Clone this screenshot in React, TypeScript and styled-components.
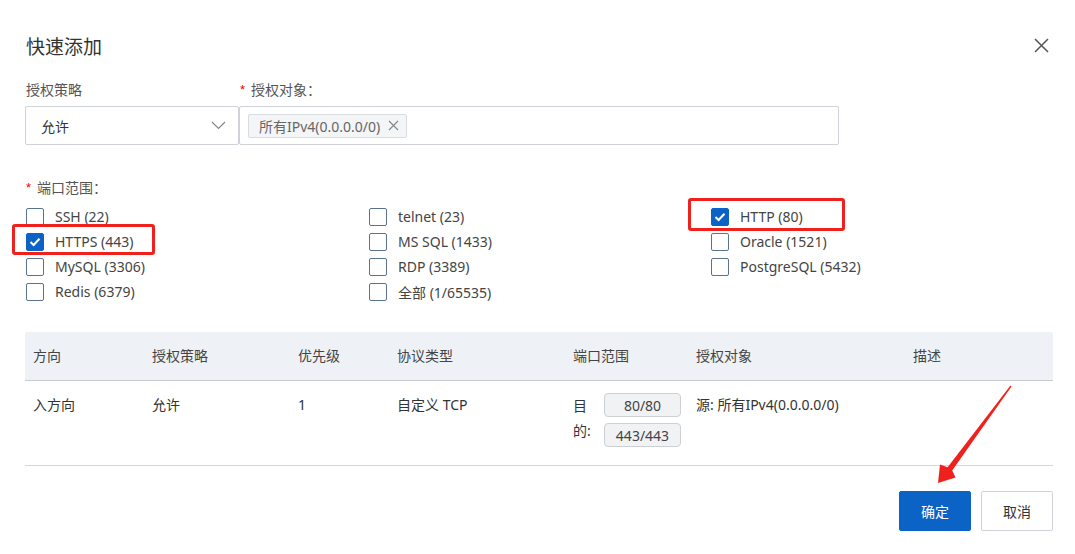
import * as React from "react";
import styled, { createGlobalStyle } from "styled-components";

const GlobalStyle = createGlobalStyle`
  html, body {
    margin: 0;
    padding: 0;
    background: #fff;
  }
  body {
    font-family: "Noto Sans", "Noto Sans CJK SC", sans-serif;
    font-size: 14px;
    color: #333;
  }
`;

const Dialog = styled.div`
  position: relative;
  width: 1075px;
  height: 554px;
  box-sizing: border-box;
  padding: 31px 22px 0 25px;
  background: #fff;
`;

const Header = styled.div`
  display: flex;
  align-items: center;
  justify-content: space-between;
  height: 28px;
`;

const Title = styled.h2`
  margin: 0;
  padding-left: 1px;
  font-size: 19px;
  font-weight: 400;
  color: #333;
  font-family: "Noto Sans CJK SC", sans-serif;
`;

const CloseButton = styled.button`
  display: flex;
  align-items: center;
  justify-content: center;
  border: 0;
  background: none;
  padding: 0;
  margin-right: 3px;
  width: 18px;
  height: 18px;
  color: #555;
  cursor: pointer;
`;

const FormRow = styled.div`
  display: flex;
  margin-top: 20px;
`;

const Field = styled.div<{ $width?: number }>`
  display: flex;
  flex-direction: column;
  width: ${(p) => (p.$width ? `${p.$width}px` : "auto")};
  flex: ${(p) => (p.$width ? "none" : "1")};
`;

const Label = styled.div<{ $required?: boolean }>`
  display: flex;
  align-items: center;
  height: 20px;
  margin-bottom: 7px;
  padding-left: ${(p) => (p.$required ? "0" : "1px")};
  font-size: 14px;
  color: #555;
  font-family: "Noto Sans CJK SC", sans-serif;
`;

const Star = styled.span`
  color: #e00;
  font-size: 13px;
  margin: 0 6px 0 1px;
  font-family: "Liberation Sans", sans-serif;
`;

const SelectBox = styled.div`
  display: flex;
  align-items: center;
  justify-content: space-between;
  box-sizing: border-box;
  height: 39px;
  padding: 0 12px 0 15px;
  border: 1px solid #cfd2d6;
  border-radius: 2px;
  color: #333;
  font-family: "Noto Sans CJK SC", sans-serif;
`;

const TagInput = styled.div`
  display: flex;
  align-items: center;
  box-sizing: border-box;
  height: 39px;
  width: 600px;
  padding: 0 8px;
  border: 1px solid #cfd2d6;
  border-radius: 2px;
`;

const Tag = styled.span`
  display: inline-flex;
  align-items: center;
  gap: 8px;
  height: 24px;
  box-sizing: border-box;
  padding: 0 7px 0 10px;
  background: #f4f5f7;
  border: 1px solid #d9dce1;
  border-radius: 2px;
  color: #666;
  font-size: 14px;
`;

const PortSection = styled.div`
  position: relative;
  margin-top: 32px;
`;

const CheckGrid = styled.div`
  display: grid;
  grid-template-columns: 343px 342px 1fr;
  grid-template-rows: repeat(4, 25px);
  grid-auto-flow: column;
  margin-top: 2px;
`;

const CheckItem = styled.label`
  display: flex;
  align-items: center;
  gap: 11px;
  padding-left: 1px;
  color: #444;
  font-size: 14px;
  cursor: pointer;
`;

const Box = styled.span<{ $checked?: boolean }>`
  display: inline-flex;
  align-items: center;
  justify-content: center;
  box-sizing: border-box;
  width: 18px;
  height: 18px;
  border-radius: 2px;
  border: 1px solid ${(p) => (p.$checked ? "#0b63c5" : "#5b7392")};
  background: ${(p) => (p.$checked ? "#0b63c5" : "#fff")};
`;

const Highlight = styled.div<{ $x: number; $y: number; $w: number; $h: number }>`
  position: absolute;
  left: ${(p) => p.$x}px;
  top: ${(p) => p.$y}px;
  width: ${(p) => p.$w}px;
  height: ${(p) => p.$h}px;
  box-sizing: border-box;
  border: 3px solid #f0201c;
  border-radius: 3px;
  pointer-events: none;
`;

const Table = styled.div`
  margin-top: 28px;
  width: 1028px;
`;

const cols = "119px 146px 99px 176px 123px 217px 1fr";

const HeadRow = styled.div`
  display: grid;
  grid-template-columns: ${cols};
  align-items: center;
  height: 48px;
  background: #eef1f6;
  border-bottom: 1px solid #c9ccd1;
  border-radius: 2px 2px 0 0;
`;

const BodyRow = styled.div`
  display: grid;
  grid-template-columns: ${cols};
  align-items: start;
  height: 85px;
  box-sizing: border-box;
  padding-top: 12px;
  border-bottom: 1px solid #d5d7da;
`;

const Cell = styled.div<{ $head?: boolean }>`
  padding-left: 8px;
  line-height: 24px;
  color: ${(p) => (p.$head ? "#444" : "#333")};
  font-size: 14px;
`;

const PortCell = styled.div`
  display: flex;
  gap: 9px;
  padding-left: 8px;
`;

const PortLabel = styled.span`
  width: 22px;
  line-height: 25px;
  color: #333;
`;

const PillStack = styled.div`
  display: flex;
  flex-direction: column;
  gap: 6px;
`;

const Pill = styled.span`
  display: inline-flex;
  align-items: center;
  justify-content: center;
  box-sizing: border-box;
  width: 77px;
  height: 24px;
  background: #f1f2f4;
  border: 1px solid #cdd0d5;
  border-radius: 4px;
  color: #444;
  font-size: 14px;
`;

const Footer = styled.div`
  display: flex;
  justify-content: flex-end;
  gap: 10px;
  margin-top: 25px;
  width: 1028px;
`;

const Button = styled.button<{ $primary?: boolean }>`
  width: 72px;
  height: 40px;
  border-radius: 2px;
  border: 1px solid ${(p) => (p.$primary ? "#0b63c5" : "#cfd2d6")};
  background: ${(p) => (p.$primary ? "#0b63c5" : "#fff")};
  color: ${(p) => (p.$primary ? "#fff" : "#333")};
  font-size: 14px;
  font-family: "Noto Sans CJK SC", sans-serif;
  cursor: pointer;
`;

const ArrowLayer = styled.svg`
  position: absolute;
  left: 0;
  top: 0;
  pointer-events: none;
`;

const ports: { label: string; checked?: boolean }[] = [
  { label: "SSH (22)" },
  { label: "HTTPS (443)", checked: true },
  { label: "MySQL (3306)" },
  { label: "Redis (6379)" },
  { label: "telnet (23)" },
  { label: "MS SQL (1433)" },
  { label: "RDP (3389)" },
  { label: "全部 (1/65535)" },
  { label: "HTTP (80)", checked: true },
  { label: "Oracle (1521)" },
  { label: "PostgreSQL (5432)" },
];

const headers = ["方向", "授权策略", "优先级", "协议类型", "端口范围", "授权对象", "描述"];

const Check = () => (
  <svg width="12" height="10" viewBox="0 0 12 10">
    <path d="M1.5 5 L4.6 8 L10.5 1.8" fill="none" stroke="#fff" strokeWidth="2" />
  </svg>
);

export default function App() {
  return (
    <>
      <GlobalStyle />
      <Dialog>
        <Header>
          <Title>快速添加</Title>
          <CloseButton aria-label="关闭">
            <svg width="15" height="15" viewBox="0 0 15 15">
              <path d="M1 1 L14 14 M14 1 L1 14" stroke="#555" strokeWidth="1.5" />
            </svg>
          </CloseButton>
        </Header>

        <FormRow>
          <Field $width={214}>
            <Label>授权策略</Label>
            <SelectBox>
              <span>允许</span>
              <svg width="15" height="9" viewBox="0 0 15 9">
                <path d="M1 1 L7.5 7.5 L14 1" fill="none" stroke="#888" strokeWidth="1.2" />
              </svg>
            </SelectBox>
          </Field>
          <Field>
            <Label $required>
              <Star>*</Star>授权对象：
            </Label>
            <TagInput>
              <Tag>
                所有IPv4(0.0.0.0/0)
                <svg width="11" height="11" viewBox="0 0 11 11">
                  <path d="M1 1 L10 10 M10 1 L1 10" stroke="#888" strokeWidth="1.2" />
                </svg>
              </Tag>
            </TagInput>
          </Field>
        </FormRow>

        <PortSection>
          <Label $required>
            <Star>*</Star>端口范围：
          </Label>
          <CheckGrid>
            {ports.map((p) => (
              <CheckItem key={p.label}>
                <Box $checked={p.checked}>{p.checked && <Check />}</Box>
                {p.label}
              </CheckItem>
            ))}
          </CheckGrid>
          <Highlight $x={-13} $y={47} $w={143} $h={31} />
          <Highlight $x={663} $y={21} $w={157} $h={33} />
        </PortSection>

        <Table>
          <HeadRow>
            {headers.map((h) => (
              <Cell key={h} $head>
                {h}
              </Cell>
            ))}
          </HeadRow>
          <BodyRow>
            <Cell>入方向</Cell>
            <Cell>允许</Cell>
            <Cell>1</Cell>
            <Cell>自定义 TCP</Cell>
            <PortCell>
              <PortLabel>目的:</PortLabel>
              <PillStack>
                <Pill>80/80</Pill>
                <Pill>443/443</Pill>
              </PillStack>
            </PortCell>
            <Cell>源: 所有IPv4(0.0.0.0/0)</Cell>
            <Cell />
          </BodyRow>
        </Table>

        <Footer>
          <Button $primary>确定</Button>
          <Button>取消</Button>
        </Footer>

        <ArrowLayer width="1075" height="554" viewBox="0 0 1075 554">
          <path d="M938 483 L940 464.5 L947.6 467.2 L1010.5 385.6 L1011.5 386.4 L952.2 470.6 L955.5 477.5 Z" fill="#f0201c" />
        </ArrowLayer>
      </Dialog>
    </>
  );
}
